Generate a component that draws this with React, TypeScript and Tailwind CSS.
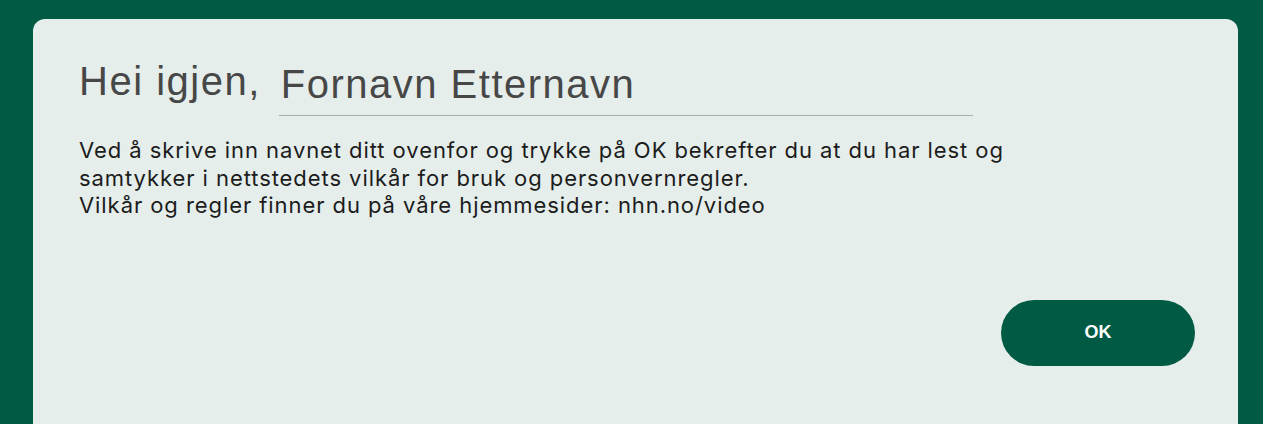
import React from "react";

export default function App() {
  return (
    <div className="w-[1263px] h-[424px] overflow-hidden bg-[#015a44] pl-[33px] pt-[19px] pr-[25px]">
      <div className="h-[420px] rounded-[12px] bg-[#e5eeeb] pl-[46px] pr-[43px] pt-[38px]">
        <div className="flex items-start">
          <span className="text-[40px] leading-[48px] tracking-[1.5px] text-[#474747] pr-[18px] [font-family:'Liberation_Sans',Arial,sans-serif]">
            Hei igjen,
          </span>
          <input
            className="w-[694px] h-[59px] bg-transparent border-0 border-b border-[#a9aeac] pl-[2px] pb-[4px] text-[40px] leading-[48px] tracking-[1.5px] text-[#474747] outline-none placeholder:text-[#474747] [font-family:'Liberation_Sans',Arial,sans-serif]"
            placeholder="Fornavn Etternavn"
          />
        </div>
        <p className="mt-[21px] text-[22px] leading-[27.5px] tracking-[0.93px] text-[#1c1c1c] [font-family:Inter,'Liberation_Sans',sans-serif]">
          Ved å skrive inn navnet ditt ovenfor og trykke på OK bekrefter du at du har lest og
          <br />
          samtykker i nettstedets vilkår for bruk og personvernregler.
          <br />
          Vilkår og regler finner du på våre hjemmesider: nhn.no/video
        </p>
        <div className="flex justify-end mt-[80px]">
          <button className="w-[194px] h-[66px] rounded-full bg-[#015a44] text-white text-[18px] font-bold [font-family:'Liberation_Sans',Arial,sans-serif]">
            OK
          </button>
        </div>
      </div>
    </div>
  );
}
